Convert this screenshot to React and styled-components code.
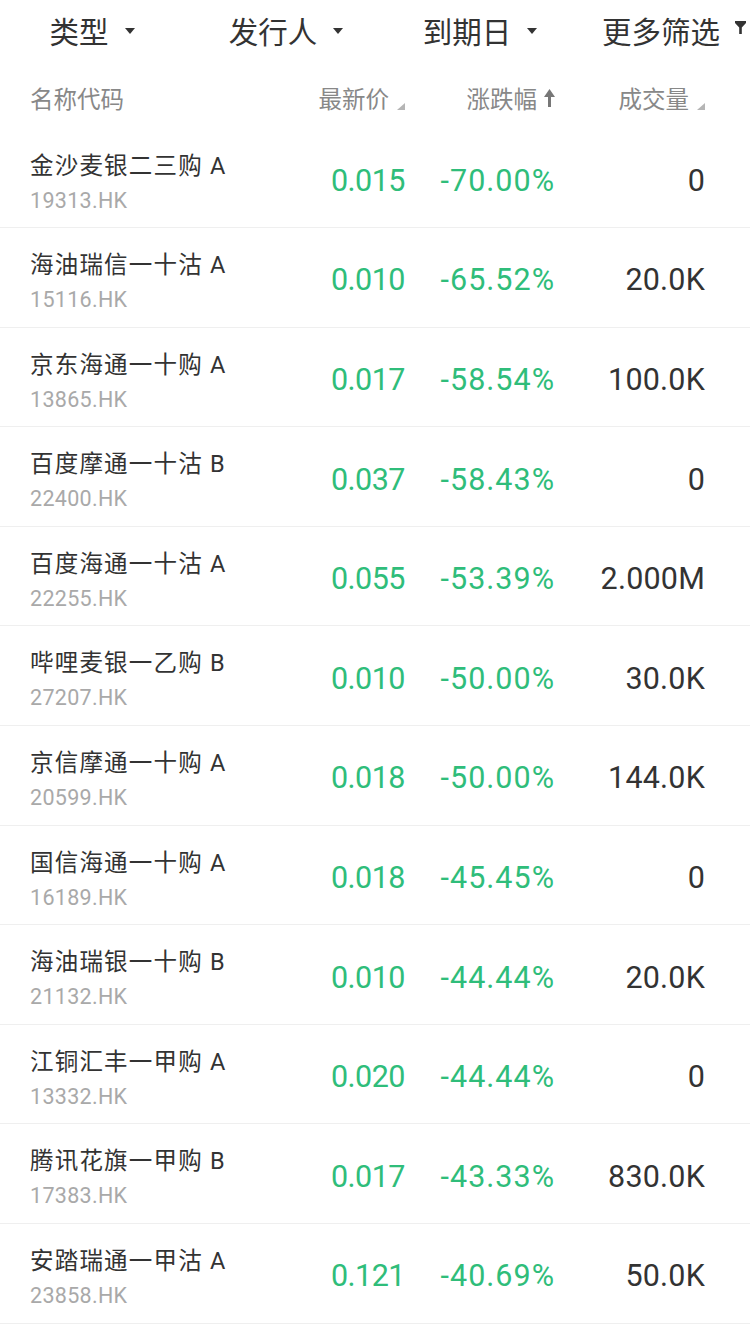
import React from 'react';
import styled, { createGlobalStyle } from 'styled-components';

const GlobalStyle = createGlobalStyle`
  html, body {
    margin: 0;
    padding: 0;
    background: #fff;
  }
  body {
    font-family: Roboto, 'Noto Sans CJK SC', sans-serif;
    -webkit-font-smoothing: antialiased;
  }
`;

const Page = styled.div`
  width: 750px;
  overflow: hidden;
  background: #fff;
`;

const FilterBar = styled.div`
  display: grid;
  grid-template-columns: repeat(4, 194px);
  margin-left: -5px;
  height: 64px;
  align-items: center;
  padding-bottom: 4px;
  box-sizing: border-box;
`;

const FilterItem = styled.div`
  display: flex;
  align-items: center;
  justify-content: center;
  font-family: 'Noto Sans CJK SC', sans-serif;
  font-size: 29.5px;
  color: #333;
  line-height: 40px;
  gap: ${(p) => (p.$funnel ? '15px' : '16px')};
`;

const Caret = styled.span`
  width: 0;
  height: 0;
  border-left: 5.5px solid transparent;
  border-right: 5.5px solid transparent;
  border-top: 6px solid #333;
  margin-top: 2px;
`;

const Grid = styled.div`
  display: grid;
  grid-template-columns: 1fr 110px 150px 150px;
  padding: 0 45px 0 30px;
`;

const HeaderRow = styled(Grid)`
  height: 64.5px;
  align-items: center;
  padding-top: 3px;
  box-sizing: border-box;
`;

const HeaderCell = styled.div`
  display: flex;
  align-items: center;
  justify-content: ${(p) => (p.$left ? 'flex-start' : 'flex-end')};
  font-family: 'Noto Sans CJK SC', sans-serif;
  font-size: 23.5px;
  color: #888;
  gap: ${(p) => (p.$arrow ? '7px' : '8px')};
`;

const SortMark = styled.span`
  width: 0;
  height: 0;
  border-left: 8px solid transparent;
  border-bottom: 7px solid #b5b5b5;
  align-self: flex-end;
  margin-bottom: 5px;
`;

const Row = styled(Grid)`
  height: 99.6px;
  box-sizing: border-box;
  border-bottom: 1px solid #efefef;
  align-items: center;
`;

const NameCell = styled.div`
  display: flex;
  flex-direction: column;
  align-self: start;
  padding-top: 20px;
`;

const Name = styled.div`
  font-family: Roboto, 'Noto Sans CJK SC', sans-serif;
  font-size: 23.5px;
  line-height: 34px;
  color: #333;
  letter-spacing: 1.2px;
  white-space: nowrap;
`;

const Code = styled.div`
  font-family: Roboto, sans-serif;
  font-size: 21.5px;
  line-height: 36px;
  color: #a9a9a9;
  letter-spacing: 0.3px;
`;

const Value = styled.div`
  text-align: right;
  font-family: Roboto, sans-serif;
  font-size: 30.5px;
  padding-top: 5px;
  color: ${(p) => (p.$green ? '#2fbd7a' : '#333')};
  letter-spacing: ${(p) => p.$spacing || '0.2px'};
`;

const FunnelIcon = () => (
  <svg width="11" height="13" viewBox="0 0 11 13" style={{ marginTop: -6 }}>
    <path d="M0 0h11v2L6.8 6.5V13H4.2V6.5L0 2z" fill="#333" />
  </svg>
);

const UpArrow = () => (
  <svg width="11" height="18" viewBox="0 0 11 18">
    <path d="M5.5 0L11 8H7V18H4V8H0z" fill="#777" />
  </svg>
);

const rows = [
  ['金沙麦银二三购 A', '19313.HK', '0.015', '-70.00%', '0'],
  ['海油瑞信一十沽 A', '15116.HK', '0.010', '-65.52%', '20.0K'],
  ['京东海通一十购 A', '13865.HK', '0.017', '-58.54%', '100.0K'],
  ['百度摩通一十沽 B', '22400.HK', '0.037', '-58.43%', '0'],
  ['百度海通一十沽 A', '22255.HK', '0.055', '-53.39%', '2.000M'],
  ['哔哩麦银一乙购 B', '27207.HK', '0.010', '-50.00%', '30.0K'],
  ['京信摩通一十购 A', '20599.HK', '0.018', '-50.00%', '144.0K'],
  ['国信海通一十购 A', '16189.HK', '0.018', '-45.45%', '0'],
  ['海油瑞银一十购 B', '21132.HK', '0.010', '-44.44%', '20.0K'],
  ['江铜汇丰一甲购 A', '13332.HK', '0.020', '-44.44%', '0'],
  ['腾讯花旗一甲购 B', '17383.HK', '0.017', '-43.33%', '830.0K'],
  ['安踏瑞通一甲沽 A', '23858.HK', '0.121', '-40.69%', '50.0K'],
];

const App = () => {
  return (
    <Page>
      <GlobalStyle />
      <FilterBar>
        <FilterItem>类型<Caret /></FilterItem>
        <FilterItem>发行人<Caret /></FilterItem>
        <FilterItem>到期日<Caret /></FilterItem>
        <FilterItem $funnel>更多筛选<FunnelIcon /></FilterItem>
      </FilterBar>
      <HeaderRow>
        <HeaderCell $left>名称代码</HeaderCell>
        <HeaderCell>最新价<SortMark /></HeaderCell>
        <HeaderCell $arrow>涨跌幅<UpArrow /></HeaderCell>
        <HeaderCell>成交量<SortMark /></HeaderCell>
      </HeaderRow>
      {rows.map(([name, code, price, change, vol]) => (
        <Row key={code}>
          <NameCell>
            <Name>{name}</Name>
            <Code>{code}</Code>
          </NameCell>
          <Value $green $spacing="-0.5px">{price}</Value>
          <Value $green $spacing="1px">{change}</Value>
          <Value>{vol}</Value>
        </Row>
      ))}
    </Page>
  );
};

export default App;
